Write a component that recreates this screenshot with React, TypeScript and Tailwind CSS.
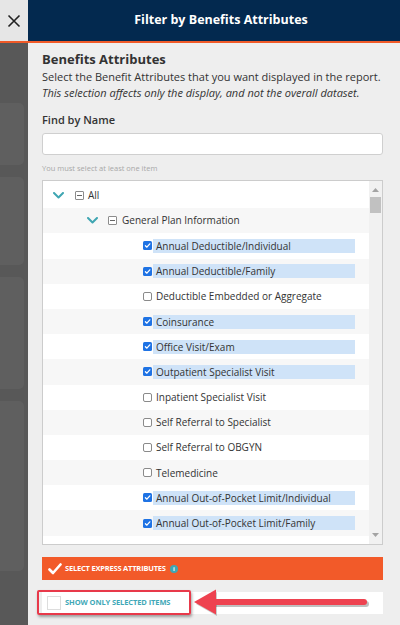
import React from 'react';

type Item = { label: string; checked: boolean };

const items: Item[] = [
  { label: 'Annual Deductible/Individual', checked: true },
  { label: 'Annual Deductible/Family', checked: true },
  { label: 'Deductible Embedded or Aggregate', checked: false },
  { label: 'Coinsurance', checked: true },
  { label: 'Office Visit/Exam', checked: true },
  { label: 'Outpatient Specialist Visit', checked: true },
  { label: 'Inpatient Specialist Visit', checked: false },
  { label: 'Self Referral to Specialist', checked: false },
  { label: 'Self Referral to OBGYN', checked: false },
  { label: 'Telemedicine', checked: false },
  { label: 'Annual Out-of-Pocket Limit/Individual', checked: true },
  { label: 'Annual Out-of-Pocket Limit/Family', checked: true },
  // only the top of this row's checkbox shows above the fold
  { label: '', checked: false },
];

const Chevron = () => (
  <svg width="11" height="7" viewBox="0 0 11 7" fill="none">
    <path d="M1 1l4.5 4.5L10 1" stroke="#3fa6b2" strokeWidth="2" strokeLinecap="round" strokeLinejoin="round" />
  </svg>
);

const MinusBox = () => (
  <span className="flex h-[9px] w-[9px] items-center justify-center rounded-[1px] border border-[#8c8c8c] bg-white">
    <span className="h-[1px] w-[5px] bg-[#666]" />
  </span>
);

const CheckBox = ({ checked }: { checked: boolean }) =>
  checked ? (
    <span className="flex h-[9px] w-[9px] items-center justify-center rounded-[1.5px] bg-[#1f73e4]">
      <svg width="7" height="7" viewBox="0 0 10 10" fill="none">
        <path d="M2 5.3l2.1 2.1L8.3 2.6" stroke="white" strokeWidth="1.8" strokeLinecap="round" strokeLinejoin="round" />
      </svg>
    </span>
  ) : (
    <span className="h-[9px] w-[9px] rounded-[2px] border border-[#8a8a8a] bg-white" />
  );

const rowBg = (i: number) => (i % 2 === 0 ? 'bg-white' : 'bg-[#f7f7f7]');

export default function App() {
  return (
    <div className="flex h-[625px] w-[400px] flex-col overflow-hidden font-['Open_Sans',sans-serif] text-[#333]">
      {/* header */}
      <div className="flex h-[43px] shrink-0 border-b-2 border-[#f05a28]">
        <button type="button" className="flex w-[28px] items-center justify-center bg-[#e6e6e6]">
          <svg width="14" height="14" viewBox="0 0 14 14" fill="none">
            <path d="M1.5 1.5l11 11M12.5 1.5l-11 11" stroke="#222" strokeWidth="1.6" />
          </svg>
        </button>
        <div className="flex flex-1 items-center justify-center bg-[#03294f] pl-[14px] text-[12.5px] font-bold text-white">
          Filter by Benefits Attributes
        </div>
      </div>

      <div className="flex flex-1">
        {/* dimmed page behind */}
        <div className="flex w-[28px] shrink-0 flex-col gap-[12px] bg-[#585858] pt-[60px]">
          <div className="-ml-[6px] h-[62px] w-[30px] rounded-[5px] bg-[#5f5f5f]" />
          <div className="-ml-[6px] h-[88px] w-[30px] rounded-[5px] bg-[#5f5f5f]" />
          <div className="-ml-[6px] h-[112px] w-[30px] rounded-[5px] bg-[#5f5f5f]" />
          <div className="-ml-[6px] h-[170px] w-[30px] rounded-[5px] bg-[#5f5f5f]" />
        </div>

        {/* panel */}
        <div className="relative flex flex-1 flex-col bg-[#eeeeee] pl-[14px] pr-[17px] pt-[8px]">
          <div className="text-[13px] font-bold leading-[16px]">Benefits Attributes</div>
          <div className="mt-[2px] text-[11px] leading-[16px]">
            Select the Benefit Attributes that you want displayed in the report.
          </div>
          <div className="text-[11px] italic leading-[16px]">
            This selection affects only the display, and not the overall dataset.
          </div>
          <div className="mt-[11px] text-[11px] font-semibold leading-[16px]">Find by Name</div>
          <input
            type="text"
            className="mt-[5px] h-[22px] rounded-[3px] border border-[#cfcfcf] bg-white px-2 text-[11px] outline-none"
          />
          <div className="mt-[8px] text-[7.5px] leading-[10px] text-[#a8a8a8]">You must select at least one item</div>

          {/* tree */}
          <div className="mt-[7px] flex h-[365px] border border-[#cccccc] bg-white">
            <div className="flex-1 overflow-hidden pt-[2px] text-[10px]">
              <div className={`flex h-[25.2px] items-center pl-[10px] ${rowBg(0)}`}>
                <Chevron />
                <span className="ml-[11px]">
                  <MinusBox />
                </span>
                <span className="ml-[4px]">All</span>
              </div>
              <div className={`flex h-[25.2px] items-center pl-[44px] ${rowBg(1)}`}>
                <Chevron />
                <span className="ml-[10px]">
                  <MinusBox />
                </span>
                <span className="ml-[5px]">General Plan Information</span>
              </div>
              {items.map((it, i) => (
                <div key={i} className={`flex h-[25.2px] items-center pl-[100px] ${rowBg(i + 2)}`}>
                  <CheckBox checked={it.checked} />
                  <span
                    className={`ml-[1px] h-[14px] w-[202px] pl-[3px] leading-[14px] ${
                      it.checked ? 'bg-[#cfe3f8]' : ''
                    }`}
                  >
                    {it.label}
                  </span>
                </div>
              ))}
            </div>
            <div className="flex w-[13px] flex-col items-center bg-[#f1f1f1] py-[7px]">
              <svg width="7" height="4" viewBox="0 0 7 4">
                <path d="M0 4L3.5 0 7 4z" fill="#a3a3a3" />
              </svg>
              <div className="mt-[5px] h-[16px] w-[11px] bg-[#c1c1c1]" />
              <div className="flex-1" />
              <svg width="7" height="4" viewBox="0 0 7 4">
                <path d="M0 0h7L3.5 4z" fill="#a3a3a3" />
              </svg>
            </div>
          </div>

          {/* express attributes */}
          <button
            type="button"
            className="mt-[12px] flex h-[23px] items-center bg-[#f25a29] pl-[6px] text-[7.5px] font-bold tracking-[-0.2px] text-white"
          >
            <svg width="14" height="12" viewBox="0 0 14 12" fill="none">
              <path d="M1.5 6.5l3.5 3.5L12.5 1.5" stroke="white" strokeWidth="2.6" strokeLinecap="round" strokeLinejoin="round" />
            </svg>
            <span className="ml-[3px]">SELECT EXPRESS ATTRIBUTES</span>
            <span className="ml-[4px] flex h-[8px] w-[8px] items-center justify-center rounded-full bg-[#3ea7b5] text-[6px] leading-none text-white">
              i
            </span>
          </button>

          {/* show only selected */}
          <div className="mt-[12px] flex h-[22px] items-center bg-white pl-[5px]">
            <span className="h-[14px] w-[14px] border border-[#dddddd] bg-white" />
            <span className="ml-[4px] text-[7.5px] font-bold tracking-[-0.1px] text-[#3fa8b7]">
              SHOW ONLY SELECTED ITEMS
            </span>
          </div>

          {/* annotation */}
          <div className="pointer-events-none absolute left-[9px] top-[547px] h-[25px] w-[154px] rounded-[2px] border-2 border-[#e8394a] shadow-[1px_2px_3px_rgba(0,0,0,0.35)]" />
          <svg
            className="pointer-events-none absolute left-[164px] top-[544px]"
            width="190"
            height="32"
            viewBox="0 0 190 32"
          >
            <path d="M24 17h150" stroke="rgba(0,0,0,0.25)" strokeWidth="6" strokeLinecap="round" />
            <path d="M4 17l21-12v24z" fill="rgba(0,0,0,0.2)" />
            <path d="M22 15h150" stroke="#ee4250" strokeWidth="6" strokeLinecap="round" />
            <path d="M2 15l22-12.5v25z" fill="#ee4250" />
          </svg>
        </div>
      </div>
    </div>
  );
}
